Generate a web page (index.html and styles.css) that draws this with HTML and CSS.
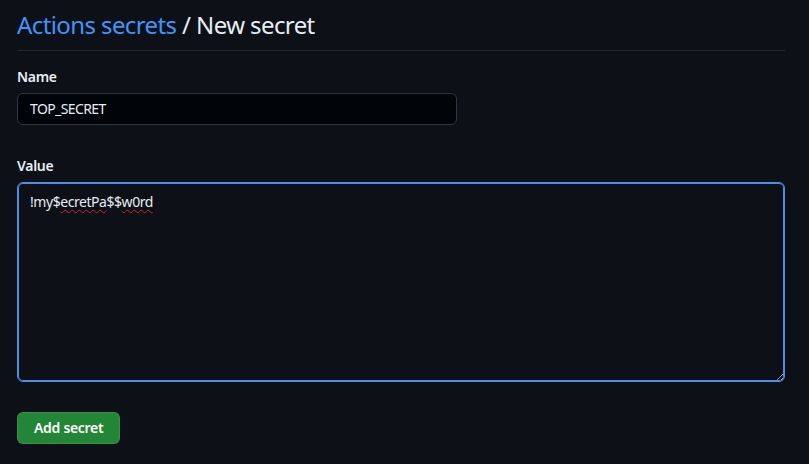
FILE: index.html
```html
<!DOCTYPE html>
<html lang="en">
<head>
<meta charset="utf-8">
<title>New secret</title>
<link rel="stylesheet" href="styles.css">
</head>
<body>
<div class="page">
  <div class="subhead">
    <h2 class="subhead-heading"><a class="crumb" href="#">Actions secrets</a> / New secret</h2>
  </div>
  <form class="form">
    <div class="form-group">
      <label class="label">Name</label>
      <div class="input">TOP_SECRET</div>
    </div>
    <div class="form-group value-group">
      <label class="label">Value</label>
      <div class="textarea">!my$<span class="spell">ecretPa</span>$$<span class="spell">w0rd</span></div>
    </div>
    <button class="btn-primary" type="button">Add secret</button>
  </form>
</div>
</body>
</html>
```
FILE: styles.css
```css
html, body {
  margin: 0;
  padding: 0;
  background: #0d1117;
  color: #e6edf3;
  font-family: "Noto Sans", "Liberation Sans", sans-serif;
  font-size: 14px;
}
.page {
  padding: 0 24px 0 17px;
}
.subhead {
  padding-top: 7px;
  padding-bottom: 7px;
  border-bottom: 1px solid #21262d;
}
.subhead-heading {
  margin: 0;
  font-size: 24px;
  font-weight: 400;
  line-height: 36px;
  letter-spacing: -0.6px;
  color: #e6edf3;
}
.crumb {
  color: #4493f8;
  text-decoration: none;
}
.form {
  display: flex;
  flex-direction: column;
  align-items: flex-start;
  padding-top: 16px;
}
.form-group {
  display: flex;
  flex-direction: column;
  gap: 6px;
  align-self: stretch;
}
.value-group {
  margin-top: 31px;
}
.label {
  font-weight: 600;
  font-size: 14px;
  line-height: 20px;
  letter-spacing: -0.3px;
  color: #e6edf3;
}
.input {
  box-sizing: border-box;
  width: 440px;
  height: 32px;
  padding: 0 12px;
  line-height: 30px;
  background: #010409;
  border: 1px solid #30363d;
  border-radius: 6px;
  color: #e6edf3;
  font-size: 14px;
  letter-spacing: -0.6px;
}
.textarea {
  box-sizing: border-box;
  height: 200px;
  padding: 9px 12px;
  line-height: 20px;
  background: #0d1117;
  border: 1px solid #4d8fe6;
  box-shadow: inset 0 0 0 1px #4d8fe6;
  border-radius: 6px;
  color: #e6edf3;
  font-size: 14px;
  letter-spacing: -0.45px;
  overflow: auto;
  resize: vertical;
}
.spell {
  text-decoration: underline wavy #d02020;
  text-decoration-thickness: 1px;
  text-underline-offset: 2px;
}
.btn-primary {
  margin-top: 30px;
  box-sizing: border-box;
  height: 32px;
  padding: 0 16px;
  white-space: nowrap;
  background: #238636;
  border: 1px solid rgba(240, 246, 252, 0.1);
  border-radius: 6px;
  color: #ffffff;
  font-family: "Noto Sans", "Liberation Sans", sans-serif;
  font-size: 14px;
  font-weight: 600;
  line-height: 20px;
  letter-spacing: -0.3px;
  cursor: pointer;
}
```
